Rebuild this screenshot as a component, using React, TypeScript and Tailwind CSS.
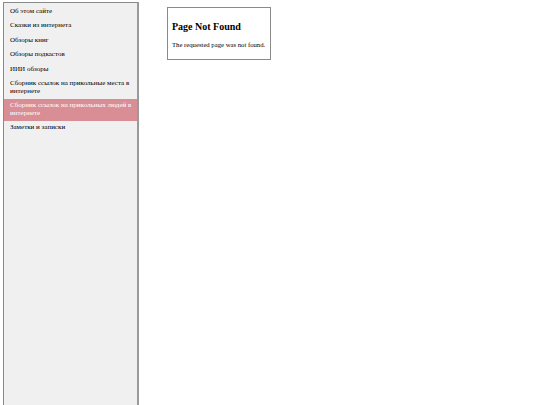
import React from "react";

const items = [
  "Об этом сайте",
  "Сказки из интернета",
  "Обзоры книг",
  "Обзоры подкастов",
  "ИИИ обзоры",
  "Сборник ссылок на прикольные места в интернете",
  "Сборник ссылок на прикольных людей в интернете",
  "Заметки и записки",
];

export default function App() {
  return (
    <div
      className="relative w-[540px] h-[405px] overflow-hidden bg-white flex items-start"
      style={{ fontFamily: '"Liberation Serif", "Times New Roman", serif' }}
    >
      <div className="ml-[3px] mt-[2px] w-[136px] h-[420px] shrink-0 bg-[#f0f0f0] border border-[#8a8a8a] border-r-2 border-r-[#9a9a9a] pt-[1px]">
        {items.map((t, i) => (
          <div
            key={i}
            className={
              i === 6
                ? "pl-[6px] pr-[2px] py-[3.5px] text-[7px] leading-[7.5px] text-white bg-[#d98d95]"
                : "pl-[6px] pr-[2px] py-[3.5px] text-[7px] leading-[7.5px] text-black"
            }
          >
            {t}
          </div>
        ))}
      </div>
      <div className="ml-[28px] mt-[7px] w-[104px] h-[53px] border border-[#8a8a8a] px-[4px] pt-[13px]">
        <div className="text-[10px] leading-[12px] font-bold text-black">Page Not Found</div>
        <div className="mt-[8px] text-[6.7px] leading-[8px] text-black">The requested page was not found.</div>
      </div>
    </div>
  );
}
